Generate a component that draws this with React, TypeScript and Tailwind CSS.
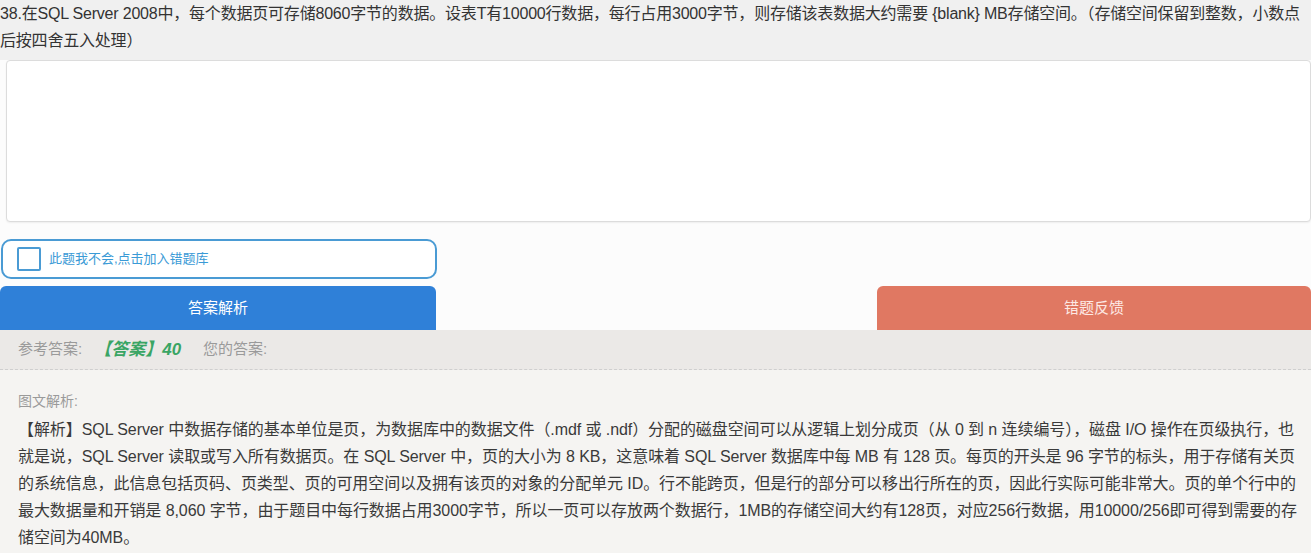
import React from "react";

const font = { fontFamily: '"Liberation Sans", "Noto Sans CJK SC", sans-serif' };

export default function App() {
  const lines = [
    "【解析】SQL Server 中数据存储的基本单位是页，为数据库中的数据文件（.mdf 或 .ndf）分配的磁盘空间可以从逻辑上划分成页（从 0 到 n 连续编号），磁盘 I/O 操作在页级执行，也",
    "就是说，SQL Server 读取或写入所有数据页。在 SQL Server 中，页的大小为 8 KB，这意味着 SQL Server 数据库中每 MB 有 128 页。每页的开头是 96 字节的标头，用于存储有关页",
    "的系统信息，此信息包括页码、页类型、页的可用空间以及拥有该页的对象的分配单元 ID。行不能跨页，但是行的部分可以移出行所在的页，因此行实际可能非常大。页的单个行中的",
    "最大数据量和开销是 8,060 字节，由于题目中每行数据占用3000字节，所以一页可以存放两个数据行，1MB的存储空间大约有128页，对应256行数据，用10000/256即可得到需要的存",
    "储空间为40MB。",
  ];
  return (
    <div className="w-[1311px] h-[553px] overflow-hidden bg-[#fcfcfc]" style={font}>
      <div className="bg-[#f0f0f0] h-[58px] text-[16px] leading-[27px] text-[#333] tracking-[-0.2px]">
        <div className="whitespace-nowrap">38.在SQL Server 2008中，每个数据页可存储8060字节的数据。设表T有10000行数据，每行占用3000字节，则存储该表数据大约需要 {"{blank}"} MB存储空间。（存储空间保留到整数，小数点</div>
        <div className="whitespace-nowrap">后按四舍五入处理）</div>
      </div>
      <div className="bg-[#f0f0f0] h-[2px]" />
      <div className="ml-[6px] h-[162px] bg-white border border-[#dcdcdc] rounded-[4px] shadow-[0_1px_2px_rgba(0,0,0,0.06)]" />
      <div className="h-[17px]" />
      <div className="ml-[1px] w-[436px] h-[40px] border-2 border-[#4a9bd4] rounded-[10px] bg-white flex items-center pl-[14px]">
        <div className="w-[24px] h-[24px] border-2 border-[#4a9bd4] rounded-[2px]" />
        <span className="ml-[8px] text-[13px] text-[#3a9ad6]">此题我不会,点击加入错题库</span>
      </div>
      <div className="h-[7px]" />
      <div className="flex justify-between">
        <div className="w-[436px] h-[44px] bg-[#2f80d8] rounded-t-[6px] flex items-center justify-center text-white text-[15px]">答案解析</div>
        <div className="w-[434px] h-[44px] bg-[#e07862] rounded-t-[6px] flex items-center justify-center text-[#fde9e4] text-[15px]">错题反馈</div>
      </div>
      <div className="h-[40px] bg-[#ebe9e7] border-b border-dashed border-[#cfcfcf] flex items-center pl-[18px] text-[15px]">
        <span className="text-[#9a9a9a]">参考答案:</span>
        <span className="ml-[12px] text-[#3aa564] font-bold italic text-[17px]">【答案】40</span>
        <span className="ml-[22px] text-[#9a9a9a]">您的答案:</span>
      </div>
      <div className="bg-[#f5f4f2] pl-[18px] pt-[19px] h-[200px]">
        <div className="text-[14px] leading-[25px] text-[#9a9a9a] mb-[2px]">图文解析:</div>
        <div className="text-[16px] leading-[27px] text-[#3a3a3a] tracking-[-0.08px]">
          {lines.map((l, i) => (
            <div key={i} className="whitespace-nowrap">{l}</div>
          ))}
        </div>
      </div>
    </div>
  );
}
